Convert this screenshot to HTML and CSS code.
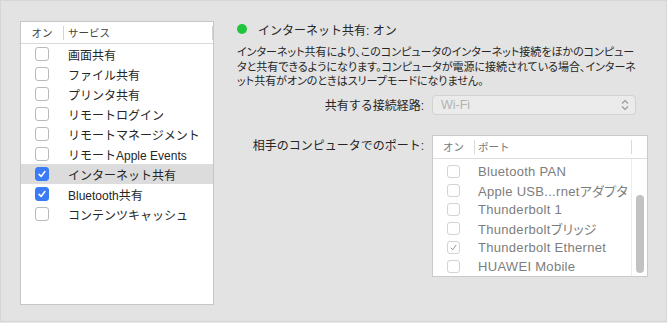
FILE: index.html
```html
<!DOCTYPE html>
<html lang="ja">
<head>
  <meta charset="UTF-8" />
  <title>共有</title>
  <link rel="stylesheet" href="styles.css">
</head>
<body>
  <div class="pane">

    <div class="service-list">
      <div class="list-head">
        <span class="col-on">オン</span>
        <span class="col-name">サービス</span>
      </div>
      <ul class="rows">
        <li class="row"><span class="col-on"><span class="check"></span></span><span class="col-name">画面共有</span></li>
        <li class="row"><span class="col-on"><span class="check"></span></span><span class="col-name">ファイル共有</span></li>
        <li class="row"><span class="col-on"><span class="check"></span></span><span class="col-name">プリンタ共有</span></li>
        <li class="row"><span class="col-on"><span class="check"></span></span><span class="col-name">リモートログイン</span></li>
        <li class="row"><span class="col-on"><span class="check"></span></span><span class="col-name">リモートマネージメント</span></li>
        <li class="row"><span class="col-on"><span class="check"></span></span><span class="col-name">リモートApple Events</span></li>
        <li class="row selected"><span class="col-on"><span class="check on"><svg viewBox="0 0 14 14"><path d="M3.6 7.4 L6 9.8 L10.4 4.2" /></svg></span></span><span class="col-name">インターネット共有</span></li>
        <li class="row"><span class="col-on"><span class="check on"><svg viewBox="0 0 14 14"><path d="M3.6 7.4 L6 9.8 L10.4 4.2" /></svg></span></span><span class="col-name">Bluetooth共有</span></li>
        <li class="row"><span class="col-on"><span class="check"></span></span><span class="col-name">コンテンツキャッシュ</span></li>
      </ul>
    </div>

    <div class="detail">
      <div class="status">
        <span class="dot"></span>
        <span class="status-text">インターネット共有: オン</span>
      </div>
      <p class="desc">
        <span>インターネット共有により、このコンピュータのインターネット接続をほかのコンピュー</span>
        <span>タと共有できるようになります。コンピュータが電源に接続されている場合、インターネ</span>
        <span>ット共有がオンのときはスリープモードになりません。</span>
      </p>

      <div class="field">
        <span class="label">共有する接続経路:</span>
        <div class="popup">
          <span>Wi-Fi</span>
          <svg class="chevrons" viewBox="0 0 8 12"><path d="M1 4.5 L4 1.5 L7 4.5 M1 7.5 L4 10.5 L7 7.5" /></svg>
        </div>
      </div>

      <div class="field ports">
        <span class="label">相手のコンピュータでのポート:</span>
        <div class="port-table">
          <div class="port-head">
            <span class="col-on">オン</span>
            <span class="col-name">ポート</span>
            <span class="col-end"></span>
          </div>
          <div class="port-body">
            <ul class="port-rows">
              <li class="port-row"><span class="col-on"><span class="box"></span></span><span class="col-name"></span><span class="col-end"></span></li>
              <li class="port-row"><span class="col-on"><span class="box"></span></span><span class="col-name">Bluetooth PAN</span><span class="col-end"></span></li>
              <li class="port-row"><span class="col-on"><span class="box"></span></span><span class="col-name">Apple USB...rnetアダプタ</span><span class="col-end"></span></li>
              <li class="port-row"><span class="col-on"><span class="box"></span></span><span class="col-name">Thunderbolt 1</span><span class="col-end"></span></li>
              <li class="port-row"><span class="col-on"><span class="box"></span></span><span class="col-name">Thunderboltブリッジ</span><span class="col-end"></span></li>
              <li class="port-row"><span class="col-on"><span class="box"><svg viewBox="0 0 13 13"><path d="M3.4 6.8 L5.6 9.2 L9.6 3.6" /></svg></span></span><span class="col-name">Thunderbolt Ethernet</span><span class="col-end"></span></li>
              <li class="port-row"><span class="col-on"><span class="box"></span></span><span class="col-name">HUAWEI Mobile</span><span class="col-end"></span></li>
            </ul>
            <div class="scroll-thumb"></div>
          </div>
        </div>
      </div>
    </div>

  </div>
</body>
</html>
```

FILE: styles.css
```css
* {
  margin: 0; padding: 0; box-sizing: border-box;
}
body {
  background: #e8e8e8;
  font-family: "Liberation Sans", "Noto Sans CJK JP", sans-serif;
  color: #262626;
  width: 667px;
  height: 323px;
  overflow: hidden;
}

.pane {
  width: 667px;
  height: 322px;
  border: 1px solid #d6d6d6;
  background: #e3e3e3;
  display: flex;
  align-items: flex-start;
  padding: 20px 0 0 19px;
}

/* service list on the left */
.service-list {
  width: 194px;
  height: 284px;
  background: #fff;
  border: 1px solid #c6c6c6;
  display: flex;
  flex-direction: column;
}
.list-head {
  display: flex;
  align-items: center;
  height: 22px;
  border-bottom: 1px solid #dadada;
  font-size: 10.5px;
  color: #444;
}
.list-head .col-on {
  width: 42px;
  text-align: center;
}
.list-head .col-name {
  flex: 1;
  border-left: 1px solid #d4d4d4;
  border-right: 1px solid #d4d4d4;
  padding-left: 4px;
  line-height: 14px;
}
.rows {
  list-style: none;
}
.row {
  display: flex;
  align-items: center;
  height: 20px;
  font-size: 12px;
}
.row.selected {
  background: #dcdcdc;
}
.row .col-on {
  width: 42px;
  display: flex;
  justify-content: center;
}
.row .col-name {
  padding-left: 5px;
  white-space: nowrap;
}
.check {
  width: 14px;
  height: 14px;
  border: 1px solid #b9b9b9;
  border-radius: 3px;
  background: #fff;
  display: flex;
}
.check.on {
  background: #3a7cf5;
  border-color: #3a7cf5;
}
.check svg {
  width: 12px;
  height: 12px;
  fill: none;
  stroke: #fff;
  stroke-width: 1.8;
  stroke-linecap: round;
  stroke-linejoin: round;
}

/* detail on the right */
.detail {
  margin-left: 23px;
  width: 411px;
}
.status {
  display: flex;
  align-items: center;
  height: 16px;
  font-size: 12px;
}
.dot {
  width: 10px;
  height: 10px;
  border-radius: 50%;
  background: #1fc53b;
  margin-right: 11px;
}
.desc {
  margin-top: 8px;
  font-size: 11px;
  line-height: 14.5px;
  font-feature-settings: "palt";
  white-space: nowrap;
}
.desc span {
  display: block;
}

.field {
  display: flex;
  align-items: center;
  margin-top: 6px;
}
.label {
  width: 187px;
  text-align: right;
  font-size: 12px;
  margin-right: 8px;
  white-space: nowrap;
}
.popup {
  width: 204px;
  height: 20px;
  border: 1px solid #d2d2d2;
  border-radius: 4px;
  background: #ebebeb;
  display: flex;
  align-items: center;
  justify-content: space-between;
  padding: 0 6px 0 8px;
  font-size: 12.5px;
  color: #b2b2b2;
}
.chevrons {
  width: 8px;
  height: 12px;
  fill: none;
  stroke: #9a9a9a;
  stroke-width: 1.2;
}

.field.ports {
  align-items: flex-start;
  margin-top: 20px;
}
.field.ports .label {
  margin-top: 3px;
  line-height: 16px;
}
.port-table {
  width: 216px;
  height: 142px;
  background: #fff;
  border: 1px solid #cacaca;
}
.port-head {
  display: flex;
  align-items: center;
  height: 23px;
  border-bottom: 1px solid #dedede;
  font-size: 10.5px;
  color: #7a7a7a;
}
.port-head .col-on {
  width: 41px;
  text-align: center;
}
.port-head .col-name {
  flex: 1;
  border-left: 1px solid #dadada;
  padding-left: 3px;
  line-height: 14px;
}
.port-head .col-end {
  width: 16px;
  height: 14px;
  border-left: 1px solid #dadada;
}
.port-body {
  position: relative;
  height: 117px;
  overflow: hidden;
}
.port-rows {
  list-style: none;
  margin-top: -16px;
}
.port-row {
  display: flex;
  align-items: center;
  height: 19px;
  font-size: 13px;
  letter-spacing: 0.3px;
  font-feature-settings: "palt";
  color: #7d7d7d;
}
.port-row .col-on {
  width: 41px;
  display: flex;
  justify-content: center;
}
.port-row .col-name {
  flex: 1;
  padding-left: 4px;
  white-space: nowrap;
  overflow: hidden;
}
.port-row .col-end {
  width: 16px;
  height: 19px;
  border-left: 1px solid #ececec;
}
.box {
  width: 13px;
  height: 13px;
  border: 1px solid #d3d3d3;
  border-radius: 3px;
  display: flex;
}
.box svg {
  width: 11px;
  height: 11px;
  fill: none;
  stroke: #8c8c8c;
  stroke-width: 1.1;
}
.scroll-thumb {
  position: absolute;
  right: 3px;
  top: 36px;
  width: 8px;
  height: 78px;
  border-radius: 4px;
  background: #c2c2c2;
}
```
